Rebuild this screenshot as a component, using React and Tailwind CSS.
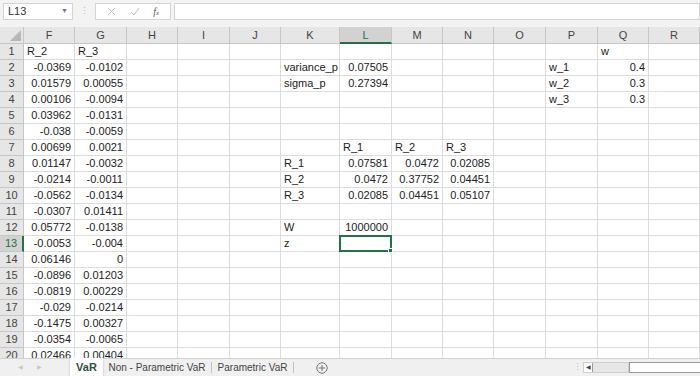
import React from 'react';

const FONT = { fontFamily: '"Liberation Sans", Arial, sans-serif' };

// column letters and widths (px)
const columns = [
  ['F', 51], ['G', 52], ['H', 51], ['I', 52], ['J', 51], ['K', 59], ['L', 52],
  ['M', 51], ['N', 51], ['O', 52], ['P', 52], ['Q', 51], ['R', 51],
];

// sheet contents: row -> { col: value }
const cells = {
  1: { F: 'R_2', G: 'R_3', Q: 'w' },
  2: { F: -0.0369, G: -0.0102, K: 'variance_p', L: 0.07505, P: 'w_1', Q: 0.4 },
  3: { F: 0.01579, G: 0.00055, K: 'sigma_p', L: 0.27394, P: 'w_2', Q: 0.3 },
  4: { F: 0.00106, G: -0.0094, P: 'w_3', Q: 0.3 },
  5: { F: 0.03962, G: -0.0131 },
  6: { F: -0.038, G: -0.0059 },
  7: { F: 0.00699, G: 0.0021, L: 'R_1', M: 'R_2', N: 'R_3' },
  8: { F: 0.01147, G: -0.0032, K: 'R_1', L: 0.07581, M: 0.0472, N: 0.02085 },
  9: { F: -0.0214, G: -0.0011, K: 'R_2', L: 0.0472, M: 0.37752, N: 0.04451 },
  10: { F: -0.0562, G: -0.0134, K: 'R_3', L: 0.02085, M: 0.04451, N: 0.05107 },
  11: { F: -0.0307, G: 0.01411 },
  12: { F: 0.05772, G: -0.0138, K: 'W', L: 1000000 },
  13: { F: -0.0053, G: -0.004, K: 'z' },
  14: { F: 0.06146, G: 0 },
  15: { F: -0.0896, G: 0.01203 },
  16: { F: -0.0819, G: 0.00229 },
  17: { F: -0.029, G: -0.0214 },
  18: { F: -0.1475, G: 0.00327 },
  19: { F: -0.0354, G: -0.0065 },
  20: { F: 0.02466, G: 0.00404 },
};

const gridTemplate = '24px ' + columns.map(([, w]) => `${w}px`).join(' ');
const rows = Array.from({ length: 20 }, (_, i) => i + 1);

const FormulaBar = () => (
  <div className="h-[27px] shrink-0 bg-[#f3f3f3] flex items-start pt-[3px] pl-[3px]">
    <div className="w-[70px] h-[17px] bg-white border border-[#d4d4d4] flex items-center justify-between px-[4px] text-[11px] text-[#333]">
      <span>L13</span>
      <span className="text-[7px] text-[#777]">▼</span>
    </div>
    <div className="w-[22px] h-[17px] flex items-center justify-center text-[#bbb] text-[9px] leading-none">⋮</div>
    <div className="w-[76px] h-[17px] bg-white border border-[#d4d4d4] flex items-center justify-around px-[4px]">
      <svg width="9" height="9" viewBox="0 0 9 9"><path d="M1 1 L8 8 M8 1 L1 8" stroke="#bdbdbd" strokeWidth="1" /></svg>
      <svg width="10" height="9" viewBox="0 0 10 9"><path d="M1 5 L4 8 L9 1" stroke="#bdbdbd" strokeWidth="1" fill="none" /></svg>
      <span className="text-[10px] italic text-[#555]" style={{ fontFamily: '"Liberation Serif", serif' }}>
        f<span className="text-[7px]">x</span>
      </span>
    </div>
    <div className="flex-1 h-[17px] ml-[3px] bg-white border border-[#d4d4d4]" />
  </div>
);

const Cell = ({ row, col, value }) => {
  const isNum = typeof value === 'number';
  const selected = row === 13 && col === 'L';
  return (
    <div
      className={`relative h-[16px] border-r border-b border-[#dcdcdc] bg-white text-[11px] leading-[15px] text-[#222] overflow-visible whitespace-nowrap ${
        isNum ? 'text-right pr-[3px]' : 'text-left pl-[3px]'
      }`}
    >
      {value !== undefined ? String(value) : ''}
      {selected && (
        <div className="absolute -left-[1px] -top-[1px] w-[53px] h-[17px] border-2 border-[#217346] z-10">
          <div className="absolute -right-[3px] -bottom-[3px] w-[5px] h-[5px] bg-[#217346] border border-white" />
        </div>
      )}
    </div>
  );
};

const Sheet = () => (
  <div className="flex-1 overflow-hidden bg-white">
    <div className="grid" style={{ gridTemplateColumns: gridTemplate }}>
      {/* corner */}
      <div className="relative h-[17px] bg-[#e6e6e6] border-r border-b border-[#c6c6c6]">
        <div className="absolute right-[2px] bottom-[2px] w-0 h-0 border-l-[11px] border-l-transparent border-b-[11px] border-b-[#b7b7b7]" />
      </div>
      {columns.map(([c]) =>
        c === 'L' ? (
          <div key={c} className="h-[17px] bg-[#d2d2d2] border-r border-[#c6c6c6] border-b-2 border-b-[#217346] text-[11px] text-[#217346] flex items-center justify-center pt-[1px]">
            {c}
          </div>
        ) : (
          <div key={c} className="h-[17px] bg-[#e6e6e6] border-r border-b border-[#c6c6c6] text-[11px] text-[#444] flex items-center justify-center">
            {c}
          </div>
        )
      )}

      {rows.map((r) => (
        <React.Fragment key={r}>
          <div
            className={`h-[16px] text-[11px] leading-[15px] text-center border-b border-[#c6c6c6] ${
              r === 13
                ? 'bg-[#d2d2d2] text-[#217346] border-r-2 border-r-[#217346]'
                : 'bg-[#e6e6e6] text-[#444] border-r border-r-[#c6c6c6]'
            }`}
          >
            {r}
          </div>
          {columns.map(([c]) => (
            <Cell key={c} row={r} col={c} value={cells[r]?.[c]} />
          ))}
        </React.Fragment>
      ))}
    </div>
  </div>
);

const TabBar = () => (
  <div className="h-[18px] shrink-0 bg-[#f0f0f0] border-t border-[#d0d0d0] flex items-stretch text-[10px] text-[#444] whitespace-nowrap">
    <div className="w-[70px] flex items-center gap-[14px] pl-[18px] text-[#c8c8c8] text-[6px]">
      <span>◀</span>
      <span>▶</span>
    </div>
    <div className="w-[33px] bg-white -mt-[1px] flex items-center justify-center font-bold text-[11px] text-[#2f4f3a] shadow-[0_1px_2px_rgba(0,0,0,0.25)]">
      VaR
    </div>
    <div className="w-[109px] flex items-center justify-center border-r border-[#c0c0c0] my-[3px]">Non - Parametric VaR</div>
    <div className="w-[82px] flex items-center justify-center border-r border-[#c0c0c0] my-[3px]">Parametric VaR</div>
    <div className="w-[56px] flex items-center justify-center">
      <svg width="12" height="12" viewBox="0 0 12 12">
        <circle cx="6" cy="6" r="5.2" stroke="#777" strokeWidth="1" fill="none" />
        <path d="M6 3 V9 M3 6 H9" stroke="#777" strokeWidth="1" />
      </svg>
    </div>
    <div className="flex-1" />
    <div className="w-[12px] flex items-center justify-center text-[#bbb] text-[9px]">⋮</div>
    <div className="w-[46px] my-[3px] bg-[#e6e6e6] border border-[#cfcfcf] flex items-center">
      <div className="w-[9px] h-full bg-white border-r border-[#9a9a9a] flex items-center justify-center text-[6px] text-[#444]">◀</div>
    </div>
    <div className="w-[71px] my-[3px] bg-white border border-[#9a9a9a] border-r-0" />
  </div>
);

export default function App() {
  return (
    <div className="w-[700px] h-[376px] overflow-hidden flex flex-col bg-white" style={FONT}>
      <FormulaBar />
      <Sheet />
      <TabBar />
    </div>
  );
}
